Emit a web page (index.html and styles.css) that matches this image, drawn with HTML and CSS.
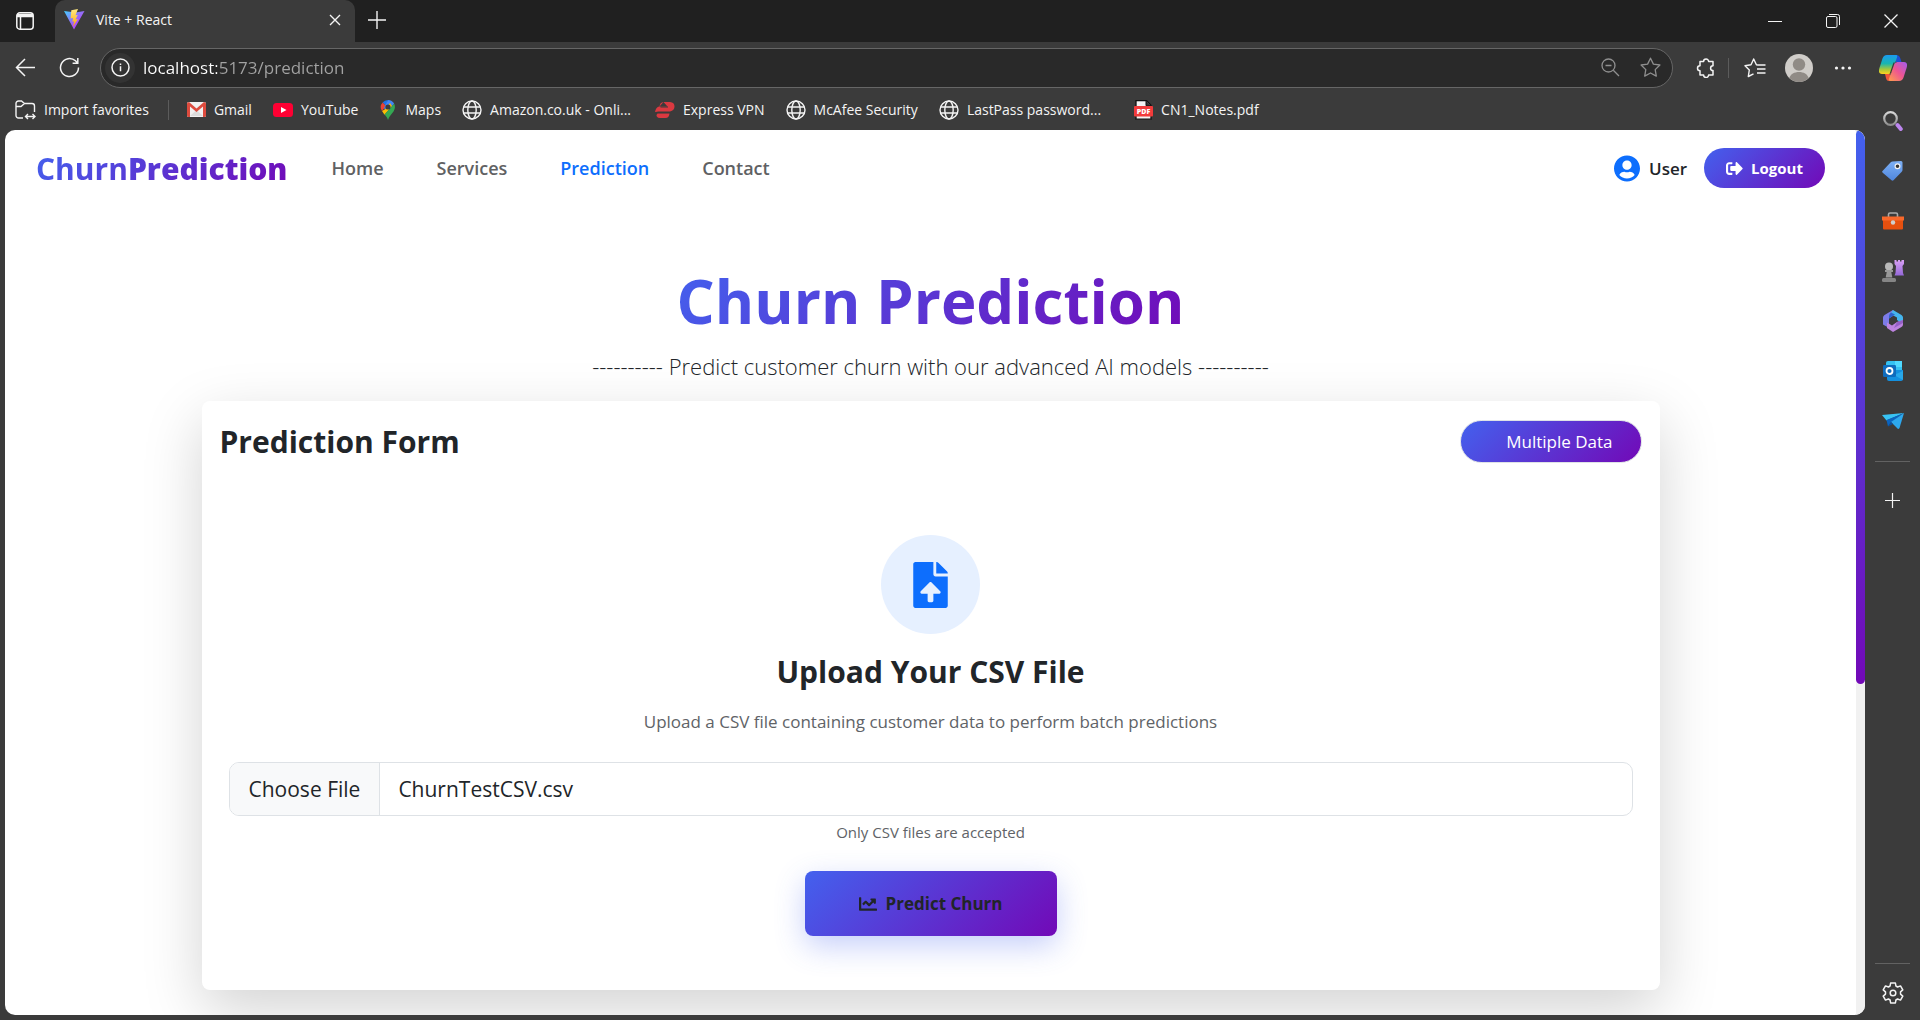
FILE: index.html
```html
<!DOCTYPE html>
<html lang="en">
<head>
<meta charset="utf-8">
<meta name="viewport" content="width=device-width, initial-scale=1">
<title>Vite + React</title>
<link rel="stylesheet" href="styles.css">
</head>
<body>
<svg class="defs" aria-hidden="true">
  <defs>
    <linearGradient id="viteBody" x1="0" y1="0" x2="1" y2="1"><stop offset="0" stop-color="#41d1ff"/><stop offset=".6" stop-color="#a855f7"/><stop offset="1" stop-color="#bd34fe"/></linearGradient>
    <linearGradient id="viteBolt" x1="0" y1="0" x2="0" y2="1"><stop offset="0" stop-color="#ffea83"/><stop offset="1" stop-color="#ffa800"/></linearGradient>
    <linearGradient id="copilotLeft" x1="0" y1="0" x2="0" y2="1"><stop offset="0" stop-color="#1a9af0"/><stop offset=".45" stop-color="#19b5b0"/><stop offset=".75" stop-color="#a5c83b"/><stop offset="1" stop-color="#ffd51f"/></linearGradient>
    <linearGradient id="copilotRight" x1="1" y1="0" x2="0" y2="1"><stop offset="0" stop-color="#a25cf0"/><stop offset=".5" stop-color="#ee5592"/><stop offset="1" stop-color="#ffa14a"/></linearGradient>
    <linearGradient id="lens" x1="0" y1="0" x2="0" y2="1"><stop offset="0" stop-color="#d6d6d6"/><stop offset="1" stop-color="#8e8e8e"/></linearGradient>
    <linearGradient id="violet" x1="0" y1="0" x2="0" y2="1"><stop offset="0" stop-color="#d9a0f5"/><stop offset="1" stop-color="#9468d8"/></linearGradient>
    <linearGradient id="tagBlue" x1="0" y1="0" x2="0" y2="1"><stop offset="0" stop-color="#7db0f5"/><stop offset="1" stop-color="#4f86dd"/></linearGradient>
    <symbol id="globe" viewBox="0 0 20 20"><g fill="none" stroke="currentColor" stroke-width="1.4"><circle cx="10" cy="10" r="9"/><ellipse cx="10" cy="10" rx="4.2" ry="9"/><path d="M1.8 7h16.4M1.8 13h16.4"/></g></symbol>
  </defs>
</svg>

<header class="tab-strip">
  <button class="tab-actions" type="button" aria-label="Tab actions">
    <svg width="20" height="20" viewBox="0 0 20 20" fill="none" stroke="currentColor" stroke-width="1.5"><rect x="1.8" y="1.8" width="16.4" height="16.4" rx="3"/><path d="M2 3.8h16M2 5.2h16" stroke-width="2"/><path d="M5.5 6v12"/></svg>
  </button>
  <div class="tab">
    <svg width="21" height="21" viewBox="0 0 21 21"><path d="M0 2l10 18.600L20.500 2l-9 1.600z" fill="url(#viteBody)"/><path d="M14 0L7.300 1.300 6.600 9.500l2.400-.5-.6 3.800 1.800-.5-1.300 5.500 5-7.800-2.400.4 2.200-4.500-2.200.4z" fill="url(#viteBolt)"/></svg>
    <span class="tab-title">Vite + React</span>
    <button class="tab-close" type="button" aria-label="Close tab"><svg width="12" height="12" viewBox="0 0 12 12" stroke="currentColor" stroke-width="1.4"><path d="M1 1l10 10M11 1L1 11"/></svg></button>
  </div>
  <button class="new-tab" type="button" aria-label="New tab"><svg width="18" height="18" viewBox="0 0 18 18" stroke="currentColor" stroke-width="1.4"><path d="M9 0v18M0 9h18"/></svg></button>
  <div class="window-controls">
    <button type="button" aria-label="Minimize"><svg width="14" height="14" viewBox="0 0 14 14" stroke="currentColor"><path d="M0 7.500h14"/></svg></button>
    <button type="button" aria-label="Restore"><svg width="14" height="14" viewBox="0 0 14 14" fill="none" stroke="currentColor"><rect x=".5" y="2.500" width="10.500" height="11" rx="1.500"/><path d="M3 .5h8.500a2 2 0 0 1 2 2v8.500"/></svg></button>
    <button type="button" aria-label="Close window"><svg width="14" height="14" viewBox="0 0 14 14" stroke="currentColor" stroke-width="1.300"><path d="M.5 .5l13 13M13.500 .5l-13 13"/></svg></button>
  </div>
</header>

<div class="frame">
  <div class="browser">
    <div class="toolbar">
      <button class="icon-button" type="button" aria-label="Back"><svg width="21" height="21" viewBox="0 0 21 21" fill="none" stroke="currentColor" stroke-width="1.500"><path d="M20 10.500H1.500M10 2L1.500 10.500 10 19"/></svg></button>
      <button class="icon-button" type="button" aria-label="Refresh"><svg width="21" height="21" viewBox="0 0 21 21" fill="none" stroke="currentColor" stroke-width="1.500"><path d="M19.500 10.500a9 9 0 1 1-3-6.700L18.500 6M18.800 1v5.200h-5.200"/></svg></button>
      <div class="address">
        <span class="site-info"><svg width="19" height="19" viewBox="0 0 19 19" fill="none" stroke="currentColor" stroke-width="1.500"><circle cx="9.500" cy="9.500" r="8.500"/><path d="M9.500 8.300v5M9.500 5.400v1.600"/></svg></span>
        <input class="url" type="text" aria-label="Address" value="localhost:5173/prediction">
        <button class="address-button" type="button" aria-label="Zoom out"><svg width="19" height="19" viewBox="0 0 19 19" fill="none" stroke="currentColor" stroke-width="1.300"><circle cx="7.500" cy="7.500" r="6.500"/><path d="M12.300 12.300L18 18M4.500 7.500h6"/></svg></button>
        <button class="address-button" type="button" aria-label="Add to favorites"><svg width="21" height="21" viewBox="0 0 21 21" fill="none" stroke="currentColor" stroke-width="1.300" stroke-linejoin="round"><path d="M10.500 1.200l2.900 5.900 6.500.9-4.700 4.600 1.100 6.500-5.800-3.100-5.800 3.100 1.100-6.500L1.100 8l6.500-.9z"/></svg></button>
      </div>
      <button class="icon-button" type="button" aria-label="Extensions"><svg width="20" height="20" viewBox="0 0 20 20" fill="none" stroke="currentColor" stroke-width="1.500" stroke-linejoin="round"><path d="M4 3.500h3.600a2.500 2.500 0 0 1 5 0H17v4.300a2.400 2.400 0 0 0 0 4.800V17h-4.400a2.500 2.500 0 0 1-5 0H4v-4.300a2.500 2.500 0 0 1 0-5z"/></svg></button>
      <span class="toolbar-divider"></span>
      <button class="icon-button" type="button" aria-label="Favorites"><svg width="22" height="20" viewBox="0 0 22 20" fill="none" stroke="currentColor" stroke-width="1.400" stroke-linejoin="round"><path d="M13.500 7L12.400 6.800 9.700 1 7 6.800l-6 .9 4.300 4.300-1 6.500 5.200-2.600M13.500 7h8M13 11h8.500M13 15h8.500"/></svg></button>
      <button class="icon-button" type="button" aria-label="Profile"><svg width="28" height="28" viewBox="0 0 28 28"><circle cx="14" cy="14" r="14" fill="#d0cdc9"/><circle cx="14" cy="10.500" r="6.200" fill="#908b86"/><path d="M4.300 24.100C5.500 20 9.500 18 14 18s8.500 2 9.700 6.100A14 14 0 0 1 14 28a14 14 0 0 1-9.700-3.900z" fill="#908b86"/></svg></button>
      <button class="icon-button" type="button" aria-label="Settings and more"><svg width="18" height="4" viewBox="0 0 18 4" fill="currentColor"><circle cx="2.500" cy="2" r="1.600"/><circle cx="9" cy="2" r="1.600"/><circle cx="15.500" cy="2" r="1.600"/></svg></button>
    </div>

    <nav class="bookmarks" aria-label="Favorites bar">
      <a class="bookmark" href="#"><svg width="21" height="20" viewBox="0 0 21 20" fill="none" stroke="currentColor" stroke-width="1.400"><path d="M8 18H3.500A2.500 2.500 0 0 1 1 15.500v-12A2.500 2.500 0 0 1 3.500 1h3L9.500 3.500h7.500A2.500 2.500 0 0 1 19.500 6v6M1 6.500h5L9.500 3.500M11 16.500h9M13 14l-2.500 2.500L13 19M17.500 14l2.500 2.500-2.500 2.500"/></svg>Import favorites</a>
      <span class="bookmark-divider"></span>
      <a class="bookmark" href="#"><svg width="19" height="15" viewBox="0 0 19 15"><rect width="19" height="15" rx="1.500" fill="#f1f1f1"/><path d="M3 14l6.500-6 6.500 6" fill="#dcdcdc"/><path d="M0 1.500v12A1.500 1.500 0 0 0 1.500 15H3V4.500l6.500 5.500L16 4.500V15h1.500a1.500 1.500 0 0 0 1.500-1.500v-12Q18.500 0 17 0L9.500 6.500 2 0Q.5 0 0 1.500z" fill="#dd4b3e"/></svg>Gmail</a>
      <a class="bookmark" href="#"><svg width="20" height="14" viewBox="0 0 20 14"><rect width="20" height="14" rx="3.500" fill="#ff0033"/><path d="M8 4l5.500 3L8 10z" fill="#fff"/></svg>YouTube</a>
      <a class="bookmark" href="#"><svg width="18" height="20" viewBox="1 0 18 20"><path d="M10 0a7 7 0 0 0-5.400 2.500L8 6z" fill="#1a73e8"/><path d="M4.600 2.500A7 7 0 0 0 4 11l4-5z" fill="#ea4335"/><path d="M10 0a7 7 0 0 1 6.200 3.800L8.500 12 6 8z" fill="#4285f4"/><path d="M7.900 8.800L4 11l2.500 3.800L14 6l-2-3z" fill="#fbbc04"/><path d="M16.200 3.800C17.500 6.500 17 9 15.500 11.500 13.500 14.500 11 16 10 20c-.7-2-1.500-3.600-3.500-5.500z" fill="#34a853"/><circle cx="10" cy="7" r="2.600" fill="#3c3c3c"/></svg>Maps</a>
      <a class="bookmark" href="#"><svg width="20" height="20"><use href="#globe"/></svg>Amazon.co.uk - Onli...</a>
      <a class="bookmark bookmark-vpn" href="#"><svg width="20" height="16" viewBox="0 0 20 16"><path d="M8.500 0H15q4.500.3 4.500 4.500 0 4-4.500 5H3.500q-2 0-3.500 1 .5-5 4-6h8.500M4.500 4.500Q5 .3 8.500 0" fill="#da3940"/><path d="M2.500 11.500h12q-.5 4.500-4 4.500h-6Q1.500 15.500 1.500 13z" fill="#da3940"/><path d="M5.500 5h7.500M0 10.600h15" stroke="#3b3b3b" stroke-width="1"/></svg>Express VPN</a>
      <a class="bookmark" href="#"><svg width="20" height="20"><use href="#globe"/></svg>McAfee Security</a>
      <a class="bookmark" href="#"><svg width="20" height="20"><use href="#globe"/></svg>LastPass password...</a>
      <a class="bookmark bookmark-file" href="#"><svg width="19" height="20" viewBox="0 0 19 20"><path d="M2 .7h10.500l4.500 4.500v14H2z" fill="#f4f4f4" stroke="#111" stroke-width="1.300"/><path d="M12 1v4.700h5" fill="#333" stroke="#111"/><rect y="6" width="19" height="10.500" rx="1" fill="#f23b3b"/><text class="pdf-mark" x="9.500" y="13.500" text-anchor="middle">PDF</text></svg>CN1_Notes.pdf</a>
    </nav>

    <div class="viewport">
      <div class="page">
        <header class="navbar">
          <a class="brand" href="#">Churn<span class="brand-strong">Prediction</span></a>
          <nav class="nav-links" aria-label="Main">
            <a class="nav-link" href="#">Home</a>
            <a class="nav-link" href="#">Services</a>
            <a class="nav-link nav-link-active" href="#">Prediction</a>
            <a class="nav-link" href="#">Contact</a>
          </nav>
          <div class="account">
            <svg class="account-icon" width="26" height="27" viewBox="0 0 496 512" fill="currentColor"><path d="M248 8C111 8 0 119 0 256s111 248 248 248 248-111 248-248S385 8 248 8zm0 96c48.600 0 88 39.400 88 88s-39.400 88-88 88-88-39.400-88-88 39.400-88 88-88zm0 344c-58.700 0-111.300-26.600-146.500-68.200 18.800-35.400 55.600-59.800 98.500-59.800 2.400 0 4.800.4 7.100 1.100 13 4.200 26.600 6.900 40.900 6.900 14.300 0 28-2.700 40.900-6.900 2.300-.7 4.700-1.100 7.100-1.100 42.900 0 79.700 24.400 98.500 59.800C359.300 421.400 306.700 448 248 448z"/></svg>
            <span class="account-name">User</span>
            <button class="logout" type="button"><svg width="17" height="17" viewBox="0 0 512 512" fill="currentColor"><path d="M497 273L329 441c-15 15-41 4.500-41-17v-96H152c-13.300 0-24-10.700-24-24v-96c0-13.300 10.700-24 24-24h136V88c0-21.400 25.900-32 41-17l168 168c9.300 9.400 9.300 24.600 0 34zM192 436v-40c0-6.600-5.400-12-12-12H96c-17.700 0-32-14.300-32-32V160c0-17.700 14.300-32 32-32h84c6.600 0 12-5.400 12-12V76c0-6.600-5.400-12-12-12H96c-53 0-96 43-96 96v192c0 53 43 96 96 96h84c6.600 0 12-5.400 12-12z"/></svg>Logout</button>
          </div>
        </header>

        <main>
          <div class="hero">
            <h1 class="hero-title">Churn Prediction</h1>
            <p class="hero-lead">---------- Predict customer churn with our advanced AI models ----------</p>
          </div>
          <section class="card">
            <div class="card-header">
              <h2 class="card-title">Prediction Form</h2>
              <button class="mode-button" type="button">Multiple Data</button>
            </div>
            <form class="upload">
              <div class="upload-badge"><svg width="35" height="46" viewBox="0 0 384 512" fill="currentColor"><path d="M224 136V0H24C10.700 0 0 10.700 0 24v464c0 13.300 10.700 24 24 24h336c13.300 0 24-10.700 24-24V160H248c-13.200 0-24-10.800-24-24zm65.180 216.010H224v80c0 8.840-7.160 16-16 16h-32c-8.840 0-16-7.160-16-16v-80H94.820c-14.280 0-21.410-17.290-11.270-27.360l96.420-95.700c6.650-6.610 17.390-6.610 24.040 0l96.420 95.700c10.150 10.070 3.030 27.360-11.250 27.360zM377 105L279.100 7c-4.500-4.500-10.600-7-17-7H256v128h128v-6.100c0-6.300-2.500-12.400-7-16.900z"/></svg></div>
              <h3 class="upload-title"><label for="csv-file">Upload Your CSV File</label></h3>
              <p class="upload-text">Upload a CSV file containing customer data to perform batch predictions</p>
              <input class="file-input" id="csv-file" type="file" accept=".csv" aria-describedby="csv-hint">
              <p class="upload-hint" id="csv-hint">Only CSV files are accepted</p>
              <button class="submit" type="button"><svg width="18" height="18" viewBox="0 0 512 512" fill="currentColor"><path d="M496 384H64V80c0-8.840-7.160-16-16-16H16C7.160 64 0 71.160 0 80v336c0 17.670 14.330 32 32 32h464c8.840 0 16-7.160 16-16v-32c0-8.840-7.160-16-16-16zM464 96H345.940c-21.380 0-32.090 25.850-16.970 40.970l32.400 32.400L288 242.750l-73.370-73.370c-12.500-12.500-32.760-12.500-45.250 0l-68.690 68.690c-6.250 6.250-6.250 16.380 0 22.630l22.620 22.620c6.250 6.250 16.380 6.250 22.630 0L192 237.250l73.370 73.370c12.500 12.500 32.760 12.500 45.250 0l96-96 32.400 32.400c15.120 15.120 40.970 4.410 40.970-16.970V112c.01-8.840-7.150-16-15.990-16z"/></svg>Predict Churn</button>
            </form>
          </section>
        </main>
      </div>
      <div class="scroll-track"><div class="scroll-thumb"></div></div>
    </div>
  </div>

  <aside class="sidebar" aria-label="Browser sidebar">
    <button class="side-button side-copilot" type="button" aria-label="Copilot"><svg width="28" height="26" viewBox="0 0 28 26"><path d="M14 0h4q2.500.3 3.200 3l1.300 4H17z" fill="#1d4fd4"/><path d="M8 0h8.500c2 0 2 1 1.500 2.500l-5 14q-1 2.500-3.500 2.500H3c-3 0-3.500-2.500-2.700-5.500L3.500 3.500C4.300 1.200 5.500 0 8 0z" fill="url(#copilotLeft)"/><path d="M14 26h-4c-3 0-3-3.500-4-7h4.500z" fill="#f0573a"/><path d="M20 26h-8.500c-2 0-2-1-1.500-2.500l5-14Q16 7 18.500 7H25c3 0 3.500 2.500 2.700 5.500l-3.200 10C23.700 24.800 22.500 26 20 26z" fill="url(#copilotRight)"/><path d="M15.800 7.500L12 18.500h-1.300L14.500 7.500z" fill="#3b3b3b"/></svg></button>
    <button class="side-button" type="button" aria-label="Search"><svg width="20" height="20" viewBox="0 0 20 20"><circle cx="7.500" cy="7.500" r="6.300" fill="none" stroke="url(#lens)" stroke-width="2.200"/><path d="M14.500 14l3.300 4" stroke="#bd86ef" stroke-width="4" stroke-linecap="round"/></svg></button>
    <button class="side-button" type="button" aria-label="Shopping"><svg width="21" height="20" viewBox="0 0 21 20"><path d="M10.500.5L19 0q1.500 0 1.500 1.500V9q0 1-1 2l-8 8.300q-1 .9-2 0L1 12q-1.500-1-.5-2l8-8.500q1-1 2-1z" fill="url(#tagBlue)"/><circle cx="15.500" cy="5.300" r="2.400" fill="#343434" stroke="#f2f2f2" stroke-width="1.200"/></svg></button>
    <button class="side-button" type="button" aria-label="Tools"><svg width="22" height="18" viewBox="0 0 22 18"><path d="M6.500 5V2.500q0-1.500 1.500-1.500h6q1.500 0 1.500 1.500V5" fill="none" stroke="#aaa" stroke-width="1.600"/><rect x="1" y="5" width="20" height="12.500" rx="1" fill="#e6500f"/><path d="M0 4.500h22v4H0z" fill="#f8682b"/><circle cx="11" cy="10.500" r="2.200" fill="#cfcfcf"/></svg></button>
    <button class="side-button" type="button" aria-label="Games"><svg width="22" height="22" viewBox="0 0 22 22"><path d="M12.500 0h2v1.500h1.500V0h2v1.500h1.500V0H22v4l-1.500 2 .5 7 1 2.500h-9.500l1-2.500.5-7-1.500-2z" fill="url(#violet)"/><circle cx="7" cy="6.500" r="4" fill="#b8b8b8"/><path d="M3 10h8v2H9.300l1 5.500h-6.600l1-5.500H3z" fill="#999"/><rect y="18" width="14" height="4" rx="1.500" fill="#858585"/></svg></button>
    <button class="side-button" type="button" aria-label="Microsoft 365"><svg width="20" height="22" viewBox="0 0 20 22"><path d="M10 0L1.500 5Q0 6 0 7.500v7L6 18V8.500l6-4z" fill="#7d7be8"/><path d="M10 0l8.500 5Q20 6 20 7.500V14l-6-4V7.500L7.500 4z" fill="#45b5ee"/><path d="M20 10v4.500q0 1.500-1.500 2.500L10 22l-6-4v-5.500l5 3 5-3.500z" fill="#bd83df"/><path d="M6 8.500L12 4.500 8 2.500Q6 4 6 6z" fill="#2e64cc"/><path d="M14 12l6-2v3l-9 5z" fill="#9560c6"/></svg></button>
    <button class="side-button" type="button" aria-label="Outlook"><svg width="20" height="20" viewBox="0 0 20 20"><path d="M5 0h14v10H3V2q0-2 2-2z" fill="#35c1f1"/><path d="M12 0h7v6h-7z" fill="#50d9ff"/><path d="M4 9h16v9q0 2-2 2H6q-2 0-2-2z" fill="#1490df"/><path d="M20 10v9L11 14z" fill="#28a8ea"/><rect y="4" width="13" height="12" rx="1.200" fill="#0f6cbd"/><circle cx="6.500" cy="10" r="3" fill="none" stroke="#fff" stroke-width="1.800"/></svg></button>
    <button class="side-button" type="button" aria-label="Drop"><svg width="22" height="16" viewBox="0 0 22 16"><path d="M22 0L0 2l4.500 5.500z" fill="#38c3f4"/><path d="M22 0L4.500 7 6 13.500l3-4z" fill="#0a64c0"/><path d="M22 0L9 9l7 7q1 0 1.500-1z" fill="#2da8ee"/><path d="M9 9l-3 4.500L11 11z" fill="#0b4fa0"/></svg></button>
    <span class="side-divider"></span>
    <button class="side-button side-add" type="button" aria-label="Customize"><svg width="15" height="15" viewBox="0 0 15 15" stroke="currentColor" stroke-width="1.200"><path d="M7.500 0v15M0 7.500h15"/></svg></button>
    <div class="side-footer">
      <span class="side-divider"></span>
      <button class="side-button" type="button" aria-label="Settings"><svg width="22" height="22" viewBox="0 0 22 22" fill="none" stroke="currentColor" stroke-width="1.500" stroke-linejoin="round"><path d="M8.600 1h4.800l.5 3 1.700 1 2.900-1.100 2.300 4-2.300 2v2.200l2.300 2-2.300 4L15.600 17l-1.700 1-.5 3H8.600l-.5-3-1.700-1-2.900 1.100-2.300-4 2.300-2V9.900l-2.300-2 2.300-4L6.400 5l1.700-1z"/><circle cx="11" cy="11" r="2.800"/></svg></button>
    </div>
  </aside>
</div>
<script src="script.js"></script>
</body>
</html>
```
FILE: styles.css
```css
* { box-sizing: border-box; }

:root {
  --brand-gradient: linear-gradient(135deg, #4361ee, #7209b7);
  --chrome: #3b3b3b;
  --ink: #212529;
}

body {
  margin: 0;
  height: 100vh;
  display: flex;
  flex-direction: column;
  background: var(--chrome);
  color: #f4f4f4;
  font-family: "Open Sans", "Noto Sans", sans-serif;
  overflow: hidden;
}

h1, h2, h3, p { margin: 0; }
button, input { font: inherit; color: inherit; }
button { padding: 0; border: 0; background: none; display: flex; align-items: center; justify-content: center; }
a { color: inherit; text-decoration: none; }
svg { flex: none; display: block; }
.defs { position: absolute; width: 0; height: 0; }

/* Tab strip */
.tab-strip { display: flex; height: 42px; background: #202020; }
.tab-actions { width: 55px; padding-right: 5px; border-radius: 0 0 8px 0; }
.tab {
  display: flex;
  align-items: center;
  width: 300px;
  padding: 0 14px 3px 9px;
  gap: 11px;
  border-radius: 10px 10px 0 0;
  background: var(--chrome);
  font-size: 14px;
}
.tab-title { flex: 1; }
.new-tab { width: 44px; padding-bottom: 2px; }
.window-controls { display: flex; margin-left: auto; }
.window-controls button { width: 58px; }

/* Frame */
.frame { flex: 1; min-height: 0; display: flex; }
.browser { flex: 1; min-width: 0; display: flex; flex-direction: column; }

/* Toolbar */
.toolbar { display: flex; align-items: center; height: 51px; padding-left: 3px; }
.icon-button { width: 44px; height: 40px; }
.toolbar-divider { width: 1px; height: 20px; margin-right: 4px; background: #5c5c5c; }
.address {
  flex: 1;
  display: flex;
  align-items: center;
  height: 40px;
  margin: 0 11px 0 9px;
  padding: 0 2px 0 4px;
  border: 1px solid #666;
  border-radius: 20px;
  background: #292929;
}
.site-info { display: flex; align-items: center; justify-content: center; width: 30px; height: 30px; border-radius: 50%; background: #333; }
.url {
  flex: 1;
  padding: 0 8px;
  border: 0;
  font-size: 17px;
  color: transparent;
  background: linear-gradient(90deg, #fff 82px, #a3a3a3 82px);
  -webkit-background-clip: text;
  background-clip: text;
}
.address-button { width: 40px; color: #8f8f8f; }

/* Favorites bar */
.bookmarks { display: flex; align-items: center; height: 37px; padding: 0 15px 4px; gap: 21px; font-size: 14px; white-space: nowrap; }
.bookmark { display: flex; align-items: center; gap: 8px; }
.bookmark-vpn { margin-left: 3px; }
.bookmark-file { margin-left: 12px; }
.bookmark-divider { width: 1px; height: 20px; margin: 0 -3px 0 -2px; background: #5c5c5c; }
.pdf-mark { font-size: 7px; font-weight: 800; fill: #fff; }

/* Page viewport */
.viewport { flex: 1; min-height: 0; display: flex; margin: 0 0 5px 5px; border-radius: 10px; background: #fff; overflow: hidden; color: var(--ink); }
.page { flex: 1; overflow: hidden; }
.scroll-track { width: 9px; background: #f1f1f1; }
.scroll-thumb { height: 62.6%; border-radius: 5px; background: linear-gradient(#4361ee, #7209b7); }

/* Navbar */
.navbar { display: flex; align-items: center; height: 76px; padding: 0 31px; }
.brand { font-size: 30px; font-weight: 700; background: var(--brand-gradient); -webkit-background-clip: text; background-clip: text; color: transparent; }
.brand-strong { font-weight: 800; }
.nav-links { display: flex; gap: 53px; margin-left: 44px; font-size: 18px; font-weight: 600; color: #5f6163; }
.nav-link-active { color: #0d6efd; }
.account { display: flex; align-items: center; gap: 9px; margin-left: auto; }
.account-icon { color: #0d6efd; }
.account-name { font-size: 17px; font-weight: 600; margin-right: 8px; }
.logout { height: 40px; padding: 0 22px; gap: 8px; border-radius: 20px; background: var(--brand-gradient); color: #fff; font-size: 15px; font-weight: 700; }

/* Hero */
.hero { padding: 57px 0 17px; text-align: center; }
.hero-title {
  width: fit-content;
  margin: 0 auto 9px;
  font-size: 60px;
  line-height: 76px;
  font-weight: 700;
  background: var(--brand-gradient);
  -webkit-background-clip: text;
  background-clip: text;
  color: transparent;
}
.hero-lead { font-size: 22px; line-height: 36px; font-weight: 300; }

/* Card */
.card { max-width: 1458px; margin: 0 auto; padding: 19px 18px 54px; border-radius: 8px; background: #fff; box-shadow: 0 20px 60px rgba(0, 0, 0, .175); }
.card-header { display: flex; align-items: center; justify-content: space-between; }
.card-title { font-size: 30px; line-height: 42px; font-weight: 700; }
.mode-button { height: 43px; padding: 0 28px 0 45px; border: 1px solid #dee2e6; border-radius: 22px; background: var(--brand-gradient); color: #fff; font-size: 17px; }

.upload { display: flex; flex-direction: column; align-items: center; padding: 72px 9px 0; }
.upload-badge { display: flex; align-items: center; justify-content: center; width: 99px; height: 99px; margin-bottom: 17px; border-radius: 50%; background: #e6f0ff; color: #0d6efd; }
.upload-title { margin-bottom: 15px; font-size: 30px; line-height: 42px; font-weight: 700; }
.upload-text { margin-bottom: 26px; font-size: 17px; line-height: 28px; color: #606367; }
.file-input { width: 100%; height: 54px; padding: 10px 18px; border: 1px solid #dee2e6; border-radius: 10px; font-size: 21px; line-height: 32px; overflow: hidden; }
.file-input::file-selector-button {
  margin: -10px 18px -10px -18px;
  padding: 10px 19px;
  border: 0;
  border-right: 1px solid #dee2e6;
  background: #f8f9fa;
  color: inherit;
  font: inherit;
}
.upload-hint { margin: 4px 0 27px; font-size: 15px; line-height: 24px; color: #606367; }
.submit { height: 65px; padding: 0 54px; gap: 9px; border-radius: 8px; background: var(--brand-gradient); color: var(--ink); font-size: 17px; font-weight: 700; box-shadow: 0 10px 30px rgba(67, 97, 238, .3); }

/* Sidebar */
.sidebar { width: 55px; display: flex; flex-direction: column; align-items: center; color: #f4f4f4; }
.side-button { width: 50px; height: 50px; }
.side-copilot { height: 52px; margin-bottom: 2px; }
.side-divider { width: 35px; height: 1px; margin-top: 15px; background: #626262; }
.side-add { margin-top: 13px; }
.side-footer { margin-top: auto; padding-bottom: 2px; display: flex; flex-direction: column; align-items: center; gap: 4px; }
```
FILE: script.js
```js
const selection = new DataTransfer();
selection.items.add(new File([""], "ChurnTestCSV.csv", { type: "text/csv" }));
document.getElementById("csv-file").files = selection.files;
```
